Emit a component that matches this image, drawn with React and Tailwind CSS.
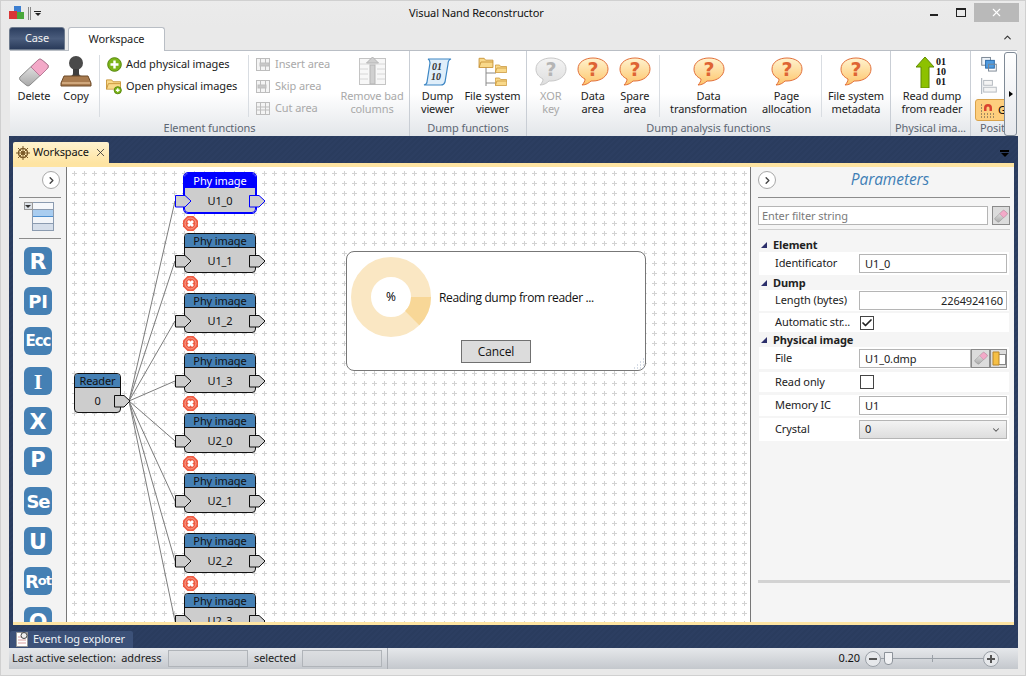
import React from 'react';
import { ChevronRight, ChevronDown, X, Check } from 'lucide-react';

const Eraser = ({ size = 32 }) => (
    <svg width={size} height={size} viewBox="0 0 32 32">
        <defs>
            <linearGradient id="er1" x1="0" y1="0" x2="0" y2="1"><stop offset="0" stopColor="#f4f4f4" /><stop offset="1" stopColor="#a9a9a9" /></linearGradient>
        </defs>
        <path d="M2 21 L20 4 Q22 2 24 4 L30 9 Q31 11 29 13 L12 29 Q10 31 8 29 L2 24 Q1 22 2 21Z" fill="url(#er1)" stroke="#8a8a8a" />
        <path d="M13 11 L20 4 Q22 2 24 4 L30 9 Q31 11 29 13 L22 20 Z" fill="#f3a9c8" stroke="#b97c98" />
    </svg>
);

const Stamp = () => (
    <svg width="32" height="32" viewBox="0 0 32 32">
        <circle cx="16" cy="7" r="7" fill="#4a4a4a" />
        <path d="M13 13h6v4q0 3 3 3H10q3 0 3-3z" fill="#3e3e3e" />
        <path d="M4 20h24l3 7v3H1v-3z" fill="#a87b4f" stroke="#6d4a28" />
        <rect x="2" y="26" width="28" height="2" fill="#cfa77c" />
    </svg>
);

const PlusCircle = () => (
    <svg width="15" height="15" viewBox="0 0 15 15">
        <circle cx="7.5" cy="7.5" r="6.8" fill="#7cb518" stroke="#55860c" />
        <path d="M7.5 3.5v8M3.5 7.5h8" stroke="#fff" strokeWidth="2.4" />
    </svg>
);

const FolderIcon = ({ w = 16, h = 13, x = 0, y = 0 }) => (
    <svg x={x} y={y} width={w} height={h} viewBox="0 0 16 13">
        <path d="M.5 2.5v10h15v-8h-8l-1.5-2z" fill="#f9d98a" stroke="#c9953a" />
        <path d="M.5 12.5l2-6h13" fill="none" stroke="#c9953a" />
    </svg>
);

const OpenFolder = () => (
    <svg width="17" height="18" viewBox="0 0 17 18">
        <FolderIcon />
        <circle cx="12.5" cy="13.5" r="3.8" fill="#7cb518" stroke="#55860c" />
        <path d="M12.5 11.5v4M10.5 13.5h4" stroke="#fff" strokeWidth="1.4" />
    </svg>
);

// grey area tools in the Element functions group
const AreaIcon = ({ kind }) => (
    <svg width="16" height="15" viewBox="0 0 16 15" fill="none" stroke="#bdbdbd">
        <rect x="1.5" y="1.5" width="13" height="12" fill="#f4f4f4" />
        <path d="M5.5 1.5v12M10.5 1.5v12" />
        {kind === 'insert' && <rect x="5" y="6" width="9" height="3" fill="#c8c8c8" />}
        {kind === 'skip' && <rect x="3" y="6" width="8" height="3" fill="#c8c8c8" />}
        {kind === 'cut' && <path d="M1.5 6h13M1.5 9h13" />}
    </svg>
);

const RemoveColumns = () => (
    <svg width="30" height="30" viewBox="0 0 30 30">
        <rect x="2.5" y="2.5" width="26" height="26" fill="#f7f7f7" stroke="#c4c4c4" />
        <path d="M3 8h25M3 13h8M3 18h8M3 23h8M20 13h8M20 18h8M20 23h8" stroke="#d6d6d6" />
        <rect x="13" y="9" width="5" height="19" fill="#d0d0d0" stroke="#b5b5b5" />
        <path d="M15.5 1l6 6h-12z" fill="#cfcfcf" stroke="#b5b5b5" />
    </svg>
);

const DumpViewer = () => (
    <svg width="32" height="32" viewBox="0 0 32 32">
        <path d="M6 3h23q-3 1-3 5l-3 18q-1 3-4 3H2q3-1 3-3l3-19q0-3-2-4z" fill="#dfeefa" stroke="#3c86c4" strokeWidth="1.2" />
        <text x="15" y="14" textAnchor="middle" fontSize="10" fontWeight="bold" fontStyle="italic" fontFamily="Liberation Serif" fill="#333">01</text>
        <text x="14" y="24" textAnchor="middle" fontSize="10" fontWeight="bold" fontStyle="italic" fontFamily="Liberation Serif" fill="#333">10</text>
    </svg>
);

const FsViewer = () => (
    <svg width="30" height="32" viewBox="0 0 30 32">
        <path d="M8 10v20M8 17h10M8 27h10" stroke="#8a8a8a" fill="none" />
        <FolderIcon w={16} h={12} x={0} y={0} />
        <FolderIcon w={12} h={10} x={17} y={7} />
        <FolderIcon w={12} h={10} x={17} y={20} />
    </svg>
);

const Bubble = ({ off, id }) => (
    <svg width="32" height="30" viewBox="0 0 32 30" className="mt-[1px]">
        <defs>
            <linearGradient id={id} x1="0" y1="0" x2="0" y2="1">
                <stop offset="0" stopColor={off ? '#f4f4f4' : '#fff3cf'} />
                <stop offset="1" stopColor={off ? '#dedede' : '#fdc56b'} />
            </linearGradient>
        </defs>
        <path d="M16 1C8 1 1 5 1 12c0 5 3 8 7 10 0 2-1 4-3 6 4 0 7-2 9-4h2c8 0 15-5 15-12S24 1 16 1z" fill={`url(#${id})`} stroke={off ? '#c8c8c8' : '#e2703a'} />
        <text x="16" y="19" textAnchor="middle" fontSize="19" fontWeight="bold" fontFamily="DejaVu Sans" fill={off ? '#b5b5b5' : '#de6434'}>?</text>
    </svg>
);

const ReadDump = () => (
    <svg width="32" height="32" viewBox="0 0 32 32">
        <path d="M9 1l9 10h-5v21H5V11H0z" fill="#8dc100" stroke="#5e8a00" />
        <text x="25" y="9" textAnchor="middle" fontSize="10" fontWeight="bold" fontFamily="Liberation Serif" fill="#111">01</text>
        <text x="25" y="19" textAnchor="middle" fontSize="10" fontWeight="bold" fontFamily="Liberation Serif" fill="#111">10</text>
        <text x="25" y="29" textAnchor="middle" fontSize="10" fontWeight="bold" fontFamily="Liberation Serif" fill="#111">01</text>
    </svg>
);

const BigButton = ({ cls, icon, lines, off }) => (
    <div className={`flex flex-col items-center shrink-0 pt-[5px] ${cls} ${off ? 'text-[#a9a9a9]' : 'text-[#222]'}`}>
        <div className="h-[33px] flex items-start justify-center">{icon}</div>
        {lines.map((l) => <div key={l} className="leading-[13px] whitespace-nowrap">{l}</div>)}
    </div>
);

const SmallButton = ({ icon, label, off }) => (
    <div className={`h-[22px] flex items-center gap-[4px] whitespace-nowrap ${off ? 'text-[#a9a9a9]' : 'text-[#222]'}`}>
        <div className="w-[16px] flex justify-center shrink-0">{icon}</div>
        {label}
    </div>
);

const Sep = () => <div className="w-px h-[62px] mt-[4px] bg-[#d9dde2] shrink-0" />;

const Group = ({ cls, label, children }) => (
    <div className={`flex flex-col shrink-0 border-r border-[#c9ced5] ${cls}`}>
        <div className="h-[70px] flex">{children}</div>
        <div className="h-[15px] text-center text-[#5d6673] leading-[14px] whitespace-nowrap overflow-hidden">{label}</div>
    </div>
);

const Ribbon = () => (
    <div className="h-[86px] ml-[9px] mr-[8px] flex relative border-t border-[#b9bec5] bg-gradient-to-b from-white via-white to-[#e3e6ea] overflow-hidden">
        <Group cls="w-[400px]" label="Element functions">
            <BigButton cls="w-[48px]" icon={<Eraser />} lines={['Delete']} />
            <BigButton cls="w-[36px]" icon={<Stamp />} lines={['Copy']} />
            <div className="w-[6px]" />
            <Sep />
            <div className="flex flex-col pt-[2px] pl-[6px] w-[148px] shrink-0">
                <SmallButton icon={<PlusCircle />} label="Add physical images" />
                <SmallButton icon={<OpenFolder />} label="Open physical images" />
            </div>
            <Sep />
            <div className="flex flex-col pt-[2px] pl-[6px] w-[86px] shrink-0">
                <SmallButton off icon={<AreaIcon kind="insert" />} label="Insert area" />
                <SmallButton off icon={<AreaIcon kind="skip" />} label="Skip area" />
                <SmallButton off icon={<AreaIcon kind="cut" />} label="Cut area" />
            </div>
            <BigButton off cls="w-[74px]" icon={<RemoveColumns />} lines={['Remove bad', 'columns']} />
        </Group>
        <Group cls="w-[117px]" label="Dump functions">
            <BigButton cls="w-[55px]" icon={<DumpViewer />} lines={['Dump', 'viewer']} />
            <BigButton cls="w-[55px]" icon={<FsViewer />} lines={['File system', 'viewer']} />
        </Group>
        <Group cls="w-[364px]" label="Dump analysis functions">
            <div className="w-[3px]" />
            <BigButton off cls="w-[42px]" icon={<Bubble off id="b0" />} lines={['XOR', 'key']} />
            <BigButton cls="w-[42px]" icon={<Bubble id="b1" />} lines={['Data', 'area']} />
            <BigButton cls="w-[42px]" icon={<Bubble id="b2" />} lines={['Spare', 'area']} />
            <div className="w-[3px]" />
            <Sep />
            <BigButton cls="w-[98px]" icon={<Bubble id="b3" />} lines={['Data', 'transformation']} />
            <BigButton cls="w-[58px]" icon={<Bubble id="b4" />} lines={['Page', 'allocation']} />
            <div className="w-[6px]" />
            <Sep />
            <BigButton cls="w-[68px]" icon={<Bubble id="b5" />} lines={['File system', 'metadata']} />
        </Group>
        <Group cls="w-[80px]" label="Physical ima...">
            <div className="w-[3px]" />
            <BigButton cls="w-[76px]" icon={<ReadDump />} lines={['Read dump', 'from reader']} />
        </Group>
        <div className="w-[34px] shrink-0 flex flex-col">
            <div className="h-[70px] flex flex-col pl-[4px] overflow-hidden">
                <svg width="18" height="17" viewBox="0 0 18 17" className="ml-[5px] mt-[5px]">
                    <rect x="1.5" y="1.5" width="9" height="8" fill="#eef3f8" stroke="#7b8794" />
                    <rect x="5.5" y="4.5" width="9" height="8" fill="#4f9be0" stroke="#2b6aa8" />
                    <rect x="8.5" y="8.5" width="8" height="7" fill="none" stroke="#7b8794" />
                </svg>
                <svg width="18" height="17" viewBox="0 0 18 17" className="ml-[5px] mt-[5px]">
                    <path d="M1.5 0v17" stroke="#9aa3ad" />
                    <rect x="3.5" y="2.5" width="9" height="5" fill="#f4f4f4" stroke="#b5bac0" />
                    <rect x="3.5" y="9.5" width="13" height="5" fill="#f4f4f4" stroke="#b5bac0" />
                </svg>
                <div className="mt-[5px] h-[22px] w-[40px] shrink-0 rounded-[3px] border border-[#d9a24a] bg-[#fdce7d] flex items-center gap-[2px] pl-[4px]">
                    <svg width="16" height="16" viewBox="0 0 16 16">
                        <path d="M4 9V6a4 4 0 0 1 8 0v3h-2.500V6a1.500 1.500 0 0 0-3 0v3z" fill="#d9432f" />
                        <path d="M1 3h1M1 6h1M1 9h1M1 12h1M1 15h1M4 12h1M4 15h1M7 12h1M7 15h1M10 12h1M10 15h1M13 12h1M13 15h1" stroke="#444" />
                    </svg>
                    <span>G</span>
                </div>
            </div>
            <div className="h-[15px] pl-[9px] text-[#5d6673] leading-[14px] whitespace-nowrap overflow-hidden">Posit</div>
        </div>
        {/* ribbon scroll button */}
        <div className="absolute right-0 top-[1px] w-[13px] h-[84px] rounded-[3px] border border-[#7f8a96] bg-gradient-to-b from-white to-[#e6e8ec] flex items-center justify-center">
            <div className="w-0 h-0 border-y-[3px] border-y-transparent border-l-[4px] border-l-black" />
        </div>
    </div>
);

const PORT = '0.5,0.5 10,0.5 16,6 10,12 0.5,12';

const Port = ({ cls, selected }) => (
    <svg width="17" height="13" viewBox="0 0 17 13" className={`absolute top-[22px] ${cls}`}>
        <polygon points={PORT} fill="#cdcdcd" stroke={selected ? '#0000ff' : '#111'} />
    </svg>
);

const nodes = ['U1_0', 'U1_1', 'U1_2', 'U1_3', 'U2_0', 'U2_1', 'U2_2', 'U2_3'];

const PhyNode = ({ name, top, selected }) => (
    <div className="absolute left-[117px] w-[72px] h-[40px]" style={{ top }}>
        <div className={`h-full rounded-[4px] overflow-hidden border bg-[#cdcdcd] ${selected ? 'border-[#0000ff] outline outline-[#0000ff]' : 'border-[#111]'}`}>
            <div className={`h-[14px] leading-[14px] text-center border-b ${selected ? 'bg-[#0000ff] text-white border-[#0000ff]' : 'bg-[#4580b4] text-[#111] border-[#111]'}`}>Phy image</div>
            <div className="text-center leading-[25px] text-[#111]">{name}</div>
        </div>
        <Port cls="left-[-9px]" selected={selected} />
        <Port cls="left-[65px]" selected={selected} />
        <svg width="15" height="15" viewBox="0 0 15 15" className="absolute left-[-1px] top-[43px]">
            <polygon points="4.500,0 10.500,0 15,4.500 15,10.500 10.500,15 4.500,15 0,10.500 0,4.500" fill="#ee5a41" />
            <circle cx="7.500" cy="7.500" r="5.500" fill="none" stroke="#f9a593" />
            <path d="M5 5l5 5M10 5l-5 5" stroke="#fff" strokeWidth="2.600" />
        </svg>
    </div>
);

const Canvas = () => (
    <div className="flex-1 relative overflow-hidden bg-white border-l border-r border-[#777]">
        <svg className="absolute inset-0" width="683" height="455">
            <defs>
                <pattern id="plus" x="5" y="4" width="10" height="10" patternUnits="userSpaceOnUse">
                    <path d="M2.500 0v5M0 2.500h5" stroke="#d2d2d2" fill="none" />
                </pattern>
            </defs>
            <rect width="683" height="455" fill="url(#plus)" />
            {nodes.map((n, i) => (
                <line key={n} x1="62" y1="234" x2="108" y2={34 + i * 60} stroke="#7d7d7d" strokeWidth="1" />
            ))}
        </svg>
        {nodes.map((n, i) => <PhyNode key={n} name={n} top={6 + i * 60} selected={i === 0} />)}
        <div className="absolute left-[7px] top-[206px] w-[47px] h-[40px]">
            <div className="h-full rounded-[4px] overflow-hidden border border-[#111] bg-[#cdcdcd]">
                <div className="h-[14px] leading-[14px] text-center bg-[#4580b4] border-b border-[#111] text-[#111]">Reader</div>
                <div className="text-center leading-[25px] text-[#111]">0</div>
            </div>
            <Port cls="left-[40px]" />
        </div>
        {/* progress dialog */}
        <div className="absolute left-[279px] top-[84px] w-[300px] h-[120px] rounded-[8px] border border-[#777] bg-white">
            <div className="flex items-center h-[90px] pl-[4px]">
                <div className="relative w-[80px] h-[80px]">
                    <svg width="80" height="80" viewBox="0 0 80 80">
                        <circle cx="40" cy="40" r="30" fill="none" stroke="#fae7c3" strokeWidth="20" />
                        <path d="M60 40h20a40 40 0 0 1-11.700 28.300L54.100 54.100A20 20 0 0 0 60 40z" fill="#f8d797" />
                    </svg>
                    <div className="absolute inset-0 flex items-center justify-center text-[12px] text-black font-['Open_Sans',sans-serif]">%</div>
                </div>
                <div className="ml-[8px] mt-[2px] text-[12px] text-[#111] font-['Open_Sans',sans-serif] tracking-[-0.35px]">Reading dump from reader ...</div>
            </div>
            <div className="flex justify-center mt-[-2px]">
                <div className="w-[70px] h-[23px] border border-[#707070] bg-[#dcdcdc] flex items-center justify-center text-[12px] text-[#111] font-['Open_Sans',sans-serif]">Cancel</div>
            </div>
            <svg width="12" height="12" viewBox="0 0 12 12" className="absolute right-0 bottom-0">
                <path d="M10 1h1M7 4h1M10 4h1M4 7h1M7 7h1M10 7h1M1 10h1M4 10h1M7 10h1M10 10h1" stroke="#a9b7cc" />
            </svg>
        </div>
    </div>
);

const ToolTile = ({ children, cls }) => (
    <div className={`w-[28px] h-[28px] shrink-0 rounded-[6px] bg-[#4580b4] text-white font-bold flex items-center justify-center font-['DejaVu_Sans',sans-serif] ${cls}`}>{children}</div>
);

const RoundChevron = () => (
    <div className="w-[18px] h-[18px] shrink-0 rounded-full border border-[#a8a8a8] bg-white flex items-center justify-center">
        <ChevronRight size={11} strokeWidth={3} className="text-[#444]" />
    </div>
);

const LeftBar = () => (
    <div className="w-[53px] shrink-0 flex flex-col items-center overflow-hidden bg-[#f3f3f3]">
        <div className="self-end shrink-0 pr-[6px] pt-[4px] pb-[8px]"><RoundChevron /></div>
        <div className="w-[42px] shrink-0 border-t border-[#8c8c8c]" />
        <div className="relative h-[41px] w-[42px] shrink-0 border-b border-[#8c8c8c]">
            <div className="absolute left-[13px] top-[4px] w-[22px] h-[29px] border border-[#8b9bb0] bg-[#e8eef6] flex flex-col">
                <div className="h-[7px] bg-[#f6f8fb] border-b border-[#8b9bb0]" />
                <div className="h-[7px] bg-[#a9cdf0] border-b border-[#4d8fcf]" />
                <div className="h-[7px] bg-[#f2f5f9] border-b border-[#8b9bb0]" />
                <div className="flex-1 bg-[#d5deea]" />
            </div>
            <div className="absolute left-[5px] top-[4px] w-[9px] h-[8px] border border-[#999] bg-[#dde2e8] flex items-center justify-center">
                <div className="w-0 h-0 border-x-[3px] border-x-transparent border-t-[3px] border-t-[#333]" />
            </div>
        </div>
        <div className="flex flex-col shrink-0 gap-[12px] mt-[8px] -ml-[3px]">
            <ToolTile cls="text-[22px]">R</ToolTile>
            <ToolTile cls="text-[18px]">PI</ToolTile>
            <ToolTile cls="text-[15px] tracking-[-1px]">Ecc</ToolTile>
            <ToolTile cls="text-[22px] font-['Liberation_Serif',serif]">I</ToolTile>
            <ToolTile cls="text-[22px]">X</ToolTile>
            <ToolTile cls="text-[21px]">P</ToolTile>
            <ToolTile cls="text-[18px] tracking-[-1px]">Se</ToolTile>
            <ToolTile cls="text-[22px]">U</ToolTile>
            <ToolTile cls="text-[13px] tracking-[-1px]"><span className="text-[18px]">R</span>ot</ToolTile>
            <ToolTile cls="text-[22px]">O</ToolTile>
        </div>
    </div>
);

const SectionHead = ({ label, cls }) => (
    <div className={`flex items-center h-[14px] font-bold text-[#222] leading-[14px] shrink-0 ${cls}`}>
        <div className="ml-[3px] mr-[6px] w-0 h-0 border-l-[6px] border-l-transparent border-b-[6px] border-b-[#2c2f6b]" />
        {label}
    </div>
);

const Row = ({ label, cls, children }) => (
    <div className={`flex items-center shrink-0 bg-white mx-[1px] text-[#222] ${cls}`}>
        <div className="w-[100px] pl-[16px] shrink-0 whitespace-nowrap">{label}</div>
        {children}
    </div>
);

const Field = ({ children, right }) => (
    <div className={`w-[148px] h-[19px] border border-[#b5b5b5] bg-white leading-[17px] px-[5px] text-[#222] ${right ? 'text-right pr-[3px]' : ''}`}>{children}</div>
);

const CheckBox = ({ checked }) => (
    <div className="w-[14px] h-[14px] ml-[1px] border border-[#444] bg-white flex items-center justify-center">
        {checked && <Check size={12} strokeWidth={3.5} className="text-[#222]" />}
    </div>
);

const RightPanel = () => (
    <div className="w-[263px] shrink-0 flex flex-col bg-[#f5f5f5] pl-[7px] pr-[4px] overflow-hidden">
        <div className="h-[31px] flex items-center border-b border-[#8c8c8c] pb-[4px] shrink-0">
            <RoundChevron />
            <div className="flex-1 text-center pr-[6px] text-[15.500px] italic text-[#3f7fb5] font-['Open_Sans',sans-serif]">Parameters</div>
        </div>
        <div className="flex items-center mt-[8px] gap-[4px] shrink-0">
            <div className="w-[230px] h-[19px] border border-[#b5b5b5] bg-white leading-[17px] pl-[3px] text-[#7a7a7a]">Enter filter string</div>
            <div className="w-[18px] h-[19px] border border-[#8a8a8a] bg-[#dcdcdc] flex items-center justify-center"><Eraser size={14} /></div>
        </div>
        <div className="mt-[4px] border-t border-[#cfcfcf] shrink-0" />
        <SectionHead label="Element" cls="mt-[8px]" />
        <Row label="Identificator" cls="h-[23px] mb-[1px]"><Field>U1_0</Field></Row>
        <SectionHead label="Dump" />
        <Row label="Length (bytes)" cls="h-[21px] mb-[2px]"><Field right>2264924160</Field></Row>
        <Row label="Automatic str..." cls="h-[19px] mb-[1px]"><CheckBox checked /></Row>
        <SectionHead label="Physical image" />
        <Row label="File" cls="h-[22px] mb-[3px]">
            <div className="w-[112px] h-[19px] border border-[#b5b5b5] leading-[17px] px-[5px]">U1_0.dmp</div>
            <div className="w-[19px] h-[19px] border border-[#8a8a8a] bg-[#dcdcdc] flex items-center justify-center"><Eraser size={14} /></div>
            <div className="w-[17px] h-[19px] border border-[#8a8a8a] bg-[#dcdcdc] flex items-center justify-center">
                <svg width="14" height="15" viewBox="0 0 14 15">
                    <rect x="6.500" y="3.500" width="7" height="10" fill="#fff" stroke="#888" />
                    <path d="M1 1h6v13H1z" fill="#f5bf45" stroke="#b9862a" />
                </svg>
            </div>
        </Row>
        <Row label="Read only" cls="h-[20px] mb-[3px]"><CheckBox /></Row>
        <Row label="Memory IC" cls="h-[21px] mb-[2px]"><Field>U1</Field></Row>
        <Row label="Crystal" cls="h-[23px]">
            <div className="w-[148px] h-[19px] border border-[#b5b5b5] bg-gradient-to-b from-[#f3f3f3] to-[#dedede] flex items-center justify-between px-[5px] text-[#222]">
                0
                <ChevronDown size={10} strokeWidth={2.5} className="text-[#555]" />
            </div>
        </Row>
        <div className="mt-[139px] h-[3px] bg-[#d3d3d3] shrink-0" />
    </div>
);

export default function App() {
    return (
        <div className="w-[1026px] h-[676px] overflow-hidden relative bg-[#e9e9e9] border border-[#d0d0d0] text-[11px] tracking-[-0.1px] font-['Noto_Sans',sans-serif] select-none">
            {/* title bar */}
            <div className="h-[26px] -mt-[1px] flex items-center bg-gradient-to-b from-[#ebebeb] to-[#e9e9e9]">
                <div className="w-[408px] flex items-center pl-[8px] gap-[3px]">
                    <svg width="16" height="14" viewBox="0 0 16 14">
                        <rect x="5" y="0" width="7" height="7" fill="#3d7fd0" />
                        <rect x="0" y="5" width="8" height="8" fill="#d93636" />
                        <rect x="8" y="6" width="7" height="7" fill="#4aa83c" />
                    </svg>
                    <div className="w-[3px] h-[13px] border-x border-[#888]" />
                    <div className="flex flex-col items-center gap-px">
                        <div className="w-[7px] h-px bg-[#222]" />
                        <div className="w-0 h-0 border-x-[3px] border-x-transparent border-t-[3px] border-t-[#222]" />
                    </div>
                </div>
                <div className="text-[#111] whitespace-nowrap">Visual Nand Reconstructor</div>
                <div className="ml-auto flex items-start self-start mr-[6px] mt-[3px]">
                    <div className="w-[8px] h-[2px] mt-[11px] mr-[18px] bg-[#222]" />
                    <div className="w-[10px] h-[9px] mt-[5px] mr-[8px] border border-[#222] border-t-2" />
                    <div className="w-[45px] h-[19px] bg-[#b9b9b9] flex items-center justify-center"><X size={13} strokeWidth={2} className="text-white" /></div>
                </div>
            </div>
            {/* ribbon tabs */}
            <div className="h-[24px] flex items-end pl-[8px] pr-[12px]">
                <div className="w-[56px] h-[23px] rounded-t-[3px] border border-[#6d7a8d] bg-gradient-to-b from-[#2d3f60] via-[#4a5c7c] to-[#2a3b5a] text-[#f0f0f0] flex items-center justify-center">Case</div>
                <div className="ml-[3px] w-[97px] h-[24px] -mb-px z-10 rounded-t-[3px] border border-b-0 border-[#b9bec5] bg-white text-[#222] flex items-center justify-center">Workspace</div>
                <ChevronDown size={11} strokeWidth={2.5} className="ml-auto mb-[7px] rotate-180 text-[#333]" />
            </div>
            <Ribbon />
            {/* dock area */}
            <div className="h-[512px] ml-[8px] mr-[7px] flex flex-col bg-[#2a3c5e] bg-[repeating-linear-gradient(135deg,#2a3c5e_0,#2a3c5e_2px,#2c3e61_2px,#2c3e61_4px)]">
                <div className="h-[27px] flex items-end pl-[4px] pr-[9px] shrink-0">
                    <div className="w-[96px] h-[21px] bg-gradient-to-b from-[#fff3cf] to-[#fee4a2] flex items-center pl-[3px] gap-[3px] text-[#111] rounded-t-[2px]">
                        <svg width="14" height="14" viewBox="0 0 14 14" fill="none" stroke="#7a5a2a">
                            <circle cx="7" cy="7" r="4.500" strokeWidth="1.500" />
                            <circle cx="7" cy="7" r="1.500" fill="#d29a32" />
                            <path d="M7 0v14M0 7h14M2 2l10 10M12 2L2 12" strokeWidth="1" />
                        </svg>
                        Workspace
                        <X size={13} strokeWidth={1.5} className="ml-[2px] text-[#333]" />
                    </div>
                    <div className="ml-auto mb-[6px] flex flex-col items-center gap-px">
                        <div className="w-[9px] h-[2px] bg-black" />
                        <div className="w-0 h-0 border-x-[4px] border-x-transparent border-t-[4px] border-t-black" />
                    </div>
                </div>
                <div className="ml-[4px] mr-[4px] h-[462px] shrink-0 flex flex-col bg-[#fee4a2] pt-[4px] pb-[3px]">
                    <div className="flex-1 flex min-h-0 overflow-hidden">
                        <LeftBar />
                        <Canvas />
                        <RightPanel />
                    </div>
                </div>
                <div className="flex-1 flex items-end pl-[1px]">
                    <div className="w-[123px] h-[17px] rounded-t-[2px] bg-[#3c5178] flex items-center pl-[6px] gap-[5px] text-[#eef1f6]">
                        <svg width="12" height="15" viewBox="0 0 12 15">
                            <path d="M.5.5h11v14H.5z" fill="#fff" stroke="#999" />
                            <path d="M2 5h8M2 8h8M2 11h8" stroke="#d9a0a0" />
                            <circle cx="8" cy="3.500" r="3" fill="#eee" stroke="#444" />
                        </svg>
                        Event log explorer
                    </div>
                </div>
            </div>
            {/* status bar */}
            <div className="h-[21px] ml-[8px] mr-[7px] flex items-center bg-gradient-to-b from-[#e6e8eb] to-[#c4c8cd] text-[#222] whitespace-nowrap">
                <div className="pl-[3px] w-[159px]">Last active selection:&nbsp; address</div>
                <div className="w-[80px] h-[17px] border border-[#b0b4b9] bg-gradient-to-b from-[#dcdee1] to-[#cfd2d6]" />
                <div className="ml-[6px] w-[48px]">selected</div>
                <div className="w-[80px] h-[17px] border border-[#b0b4b9] bg-gradient-to-b from-[#dcdee1] to-[#cfd2d6]" />
                <div className="ml-[5px] w-px h-full bg-[#a9adb3]" />
                <div className="ml-auto mr-[19px] flex items-center">
                    <span className="mr-[5px] text-[#111]">0.20</span>
                    <div className="w-[16px] h-[16px] rounded-full border border-[#9aa0a7] flex items-center justify-center bg-[#e6e8eb]"><div className="w-[8px] h-[2px] bg-[#555]" /></div>
                    <div className="relative w-[102px] h-px bg-[#9aa0a7]">
                        <div className="absolute left-[51px] top-[-3px] h-[7px] w-px bg-[#9aa0a7]" />
                        <div className="absolute left-[3px] top-[-6px] w-[9px] h-[13px] bg-[#f1f2f4] border border-[#8d939a] rounded-b-[4px]" />
                    </div>
                    <div className="w-[16px] h-[16px] rounded-full border border-[#9aa0a7] flex items-center justify-center bg-[#e6e8eb] relative">
                        <div className="w-[8px] h-[2px] bg-[#555]" />
                        <div className="absolute w-[2px] h-[8px] bg-[#555]" />
                    </div>
                </div>
            </div>
        </div>
    );
}
